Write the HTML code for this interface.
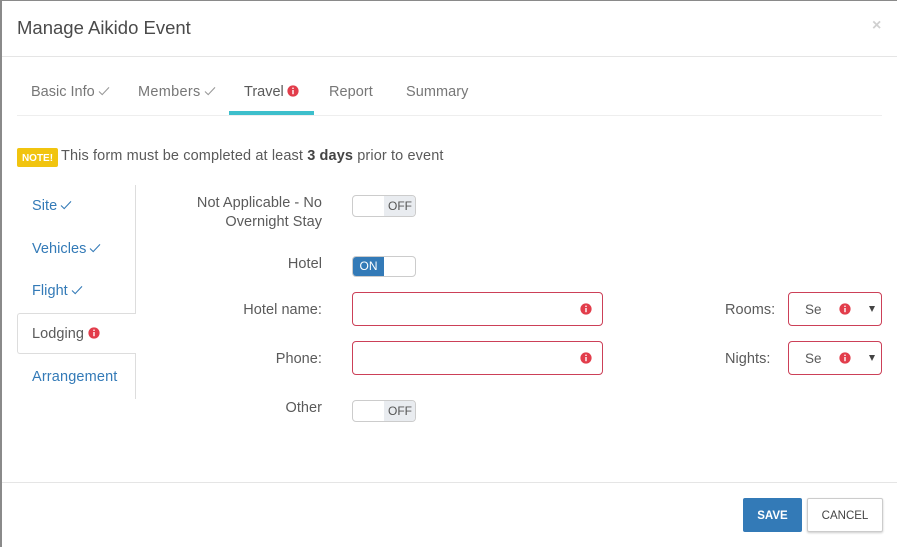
<!DOCTYPE html>
<html><head><meta charset="utf-8"><style>
html,body{margin:0;padding:0;background:#fff}
#p{position:relative;width:897px;height:547px;overflow:hidden;background:#fff;font-family:"Liberation Sans",sans-serif;font-size:14.5px;color:#5a5a5a}
.t{position:absolute;white-space:nowrap;line-height:20px;letter-spacing:.05px}
.r{text-align:right}
.b{position:absolute;box-sizing:border-box}
.l{color:#337ab7}
.g{color:#777}
.ok{position:absolute}
.in{position:absolute;box-sizing:border-box;border:1px solid #cc4058;border-radius:4px;background:#fff}
.tg{position:absolute;box-sizing:border-box;width:64px;border:1px solid #ccc;border-radius:4px;overflow:hidden;background:#fff}
.off{position:absolute;left:31px;top:0;bottom:0;width:32px;background:#e9ecf0;font-size:12px;line-height:20px;text-align:center;color:#555}
.on{position:absolute;left:0;top:0;bottom:0;width:31px;background:#337ab7;font-size:12px;line-height:19px;text-align:center;color:#fff}
</style></head><body><div id="p">
<svg width="0" height="0" style="position:absolute"><defs>
<symbol id="i" viewBox="0 0 12 12"><circle cx="6" cy="6" r="5.6" fill="#e23d4b"/><rect x="5.3" y="2.6" width="1.4" height="1.4" fill="#fff"/><rect x="5.3" y="5" width="1.4" height="4.2" fill="#fff"/></symbol>
<symbol id="c" viewBox="0 0 12 10"><path d="M1 5.5 L4.2 8.6 L11 1.4" fill="none" stroke="currentColor" stroke-width="1.1"/></symbol>
</defs></svg>

<div class="b" style="left:0;top:0;width:897px;height:1px;background:#8a8a8a"></div>
<div class="b" style="left:0;top:0;width:2px;height:547px;background:#8a8a8a"></div>
<div class="b" style="left:2px;top:56px;width:895px;height:1px;background:#e5e5e5"></div>
<div class="t" style="left:17px;top:18px;font-size:18.5px;color:#4a4a4a;letter-spacing:0">Manage Aikido Event</div>
<div class="t" style="left:872px;top:16px;font-size:16px;font-weight:bold;color:#d0d0d0">×</div>

<div class="t g" style="left:31px;top:82px;letter-spacing:0">Basic Info</div>
<svg class="ok" style="left:98px;top:86px;color:#999" width="12" height="10"><use href="#c"/></svg>
<div class="t g" style="left:138px;top:82px;letter-spacing:.3px">Members</div>
<svg class="ok" style="left:204px;top:86px;color:#999" width="12" height="10"><use href="#c"/></svg>
<div class="t" style="left:244px;top:82px;letter-spacing:0">Travel</div>
<svg class="ok" style="left:287px;top:85px" width="12" height="12"><use href="#i"/></svg>
<div class="t g" style="left:329px;top:82px">Report</div>
<div class="t g" style="left:406px;top:82px">Summary</div>
<div class="b" style="left:17px;top:115px;width:865px;height:1px;background:#eee"></div>
<div class="b" style="left:229px;top:111px;width:85px;height:4px;background:#3dbfcc"></div>

<div class="b" style="left:17px;top:148px;width:41px;height:19px;background:#f1c40f;border-radius:2px;color:#fff;font-size:10px;font-weight:bold;line-height:22px;text-align:center">NOTE!</div>
<div class="t" style="left:61px;top:146px;letter-spacing:.12px">This form must be completed at least <b style="color:#444">3 days</b> prior to event</div>

<div class="b" style="left:135px;top:185px;width:1px;height:128px;background:#ddd"></div>
<div class="b" style="left:17px;top:313px;width:119px;height:41px;border:1px solid #ddd;border-right:0;border-radius:3px 0 0 3px;background:#fff"></div>
<div class="b" style="left:135px;top:353px;width:1px;height:46px;background:#ddd"></div>
<div class="t l" style="left:32px;top:196px">Site</div>
<svg class="ok" style="left:60px;top:200px;color:#337ab7" width="12" height="10"><use href="#c"/></svg>
<div class="t l" style="left:32px;top:239px">Vehicles</div>
<svg class="ok" style="left:89px;top:243px;color:#337ab7" width="12" height="10"><use href="#c"/></svg>
<div class="t l" style="left:32px;top:281px">Flight</div>
<svg class="ok" style="left:71px;top:285px;color:#337ab7" width="12" height="10"><use href="#c"/></svg>
<div class="t" style="left:32px;top:324px">Lodging</div>
<svg class="ok" style="left:88px;top:327px" width="12" height="12"><use href="#i"/></svg>
<div class="t l" style="left:32px;top:367px;letter-spacing:.15px">Arrangement</div>

<div class="t r" style="right:575px;top:193px">Not Applicable - No</div>
<div class="t r" style="right:575px;top:212px">Overnight Stay</div>
<div class="t r" style="right:575px;top:254px">Hotel</div>
<div class="t r" style="right:575px;top:300px">Hotel name:</div>
<div class="t r" style="right:575px;top:349px">Phone:</div>
<div class="t r" style="right:575px;top:398px">Other</div>

<div class="tg" style="left:352px;top:195px;height:22px"><div class="off">OFF</div></div>
<div class="tg" style="left:352px;top:256px;height:21px"><div class="on">ON</div></div>
<div class="tg" style="left:352px;top:400px;height:22px"><div class="off">OFF</div></div>

<div class="in" style="left:352px;top:292px;width:251px;height:34px"></div>
<svg class="ok" style="left:580px;top:303px" width="12" height="12"><use href="#i"/></svg>
<div class="in" style="left:352px;top:341px;width:251px;height:34px"></div>
<svg class="ok" style="left:580px;top:352px" width="12" height="12"><use href="#i"/></svg>

<div class="t" style="left:725px;top:300px">Rooms:</div>
<div class="t" style="left:725px;top:349px">Nights:</div>
<div class="in" style="left:788px;top:292px;width:94px;height:34px"></div>
<div class="t" style="left:805px;top:300px;font-size:13.5px">Se</div>
<svg class="ok" style="left:839px;top:303px" width="12" height="12"><use href="#i"/></svg>
<svg class="ok" style="left:869px;top:306px" width="6" height="6"><path d="M0 0H6L3 6Z" fill="#444"/></svg>
<div class="in" style="left:788px;top:341px;width:94px;height:34px"></div>
<div class="t" style="left:805px;top:349px;font-size:13.5px">Se</div>
<svg class="ok" style="left:839px;top:352px" width="12" height="12"><use href="#i"/></svg>
<svg class="ok" style="left:869px;top:355px" width="6" height="6"><path d="M0 0H6L3 6Z" fill="#444"/></svg>

<div class="b" style="left:2px;top:482px;width:895px;height:1px;background:#e5e5e5"></div>
<div class="b" style="left:743px;top:498px;width:59px;height:34px;background:#337ab7;border-radius:2px;color:#fff;font-size:11.5px;font-weight:bold;line-height:36px;text-align:center">SAVE</div>
<div class="b" style="left:807px;top:498px;width:76px;height:34px;background:#fff;border:1px solid #ccc;border-radius:2px;box-shadow:0 1px 2px rgba(0,0,0,.2);color:#444;font-size:11.5px;line-height:34px;text-align:center">CANCEL</div>
</div></body></html>
